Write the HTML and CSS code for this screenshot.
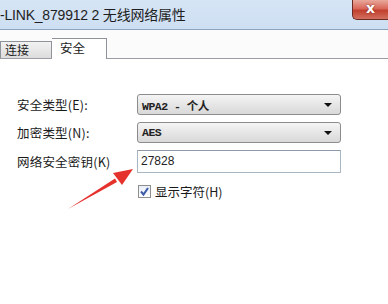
FILE: index.html
```html
<!DOCTYPE html>
<html lang="zh">
<head>
<meta charset="utf-8">
<link rel="stylesheet" href="styles.css">
</head>
<body>
<div class="window">
  <div class="titlebar">
    <span class="title">-LINK_879912 2 无线网络属性</span>
    <div class="close"><span>x</span></div>
  </div>
  <div class="tabstrip">
    <div class="tab">连接</div>
    <div class="tab active">安全</div>
  </div>
  <div class="content">
    <div class="form">
      <label class="lbl">安全类型(E):</label>
      <div class="select"><span>WPA2 - 个人</span><i class="caret"></i></div>
      <label class="lbl">加密类型(N):</label>
      <div class="select"><span>AES</span><i class="caret"></i></div>
      <label class="lbl">网络安全密钥(K)</label>
      <div class="input">27828</div>
      <span></span>
      <div class="check"><span class="box"><svg width="11" height="11" viewBox="0 0 11 11"><path d="M2 5.5 L4.5 8.5 L9 2" fill="none" stroke="#3b5aa8" stroke-width="2"/></svg></span><span>显示字符(H)</span></div>
    </div>
    <svg class="arrow" width="100" height="60" viewBox="0 0 100 60">
      <path d="M5 50 L52 19.5 L54 23 Z" fill="#e5322d"/>
      <path d="M70 10 L50 14 L59 26 Z" fill="#e5322d"/>
    </svg>
  </div>
</div>
</body>
</html>
```
FILE: styles.css
```css
html, body {
  margin: 0;
  padding: 0;
  background: #fff;
}
.window {
  width: 388px;
  height: 304px;
  overflow: hidden;
  font-family: "Noto Sans CJK SC", "Liberation Sans", sans-serif;
  color: #1a1a1a;
}
.titlebar {
  height: 30px;
  display: flex;
  align-items: flex-start;
  background: linear-gradient(#d6e5f5, #cddff2);
  border-bottom: 1px solid #8da2bb;
  box-sizing: border-box;
}
.title {
  font-family: "Liberation Sans", "Noto Sans CJK SC", sans-serif;
  font-size: 14px;
  line-height: 30px;
  color: #1e1e1e;
  letter-spacing: -0.2px;
}
.close {
  margin-left: auto;
  width: 36px;
  height: 20px;
  box-sizing: border-box;
  border: 1px solid #6b2a22;
  border-top: none;
  border-right: none;
  border-bottom-left-radius: 5px;
  background: linear-gradient(#e8a89b 0%, #d9685a 45%, #c2402e 55%, #d2705f 100%);
  display: flex;
  justify-content: center;
  align-items: center;
}
.close span {
  font-family: "DejaVu Sans", sans-serif;
  font-weight: bold;
  color: #fff;
  font-size: 14px;
  line-height: 1;
  margin-top: -3px;
  text-shadow: 0 0 2px #7a2418;
}
.tabstrip {
  height: 29px;
  display: flex;
  align-items: flex-end;
  background: #fbfbfb;
  border-bottom: 1px solid #9a9da3;
  box-sizing: border-box;
}
.tab {
  height: 17px;
  width: 52px;
  box-sizing: border-box;
  border: 1px solid #8e929a;
  border-bottom: none;
  background: linear-gradient(#f2f2f2, #dcdcdc);
  font-size: 12px;
  line-height: 15px;
  padding-left: 4px;
}
.tab.active {
  height: 21px;
  width: 55px;
  background: #fff;
  border-left: none;
  margin-bottom: -1px;
  padding-left: 8px;
  line-height: 18px;
  font-size: 12.5px;
}
.content {
  position: relative;
  padding: 35px 0 0 17px;
}
.form {
  display: grid;
  grid-template-columns: 120px 204px;
  grid-template-rows: 21px 21px 23px 17px;
  row-gap: 7px;
  align-items: center;
}
.form .input { margin-top: -1px; }
.form .check { margin-top: 6px; }
.lbl {
  font-size: 12.5px;
  color: #1a1a1a;
  letter-spacing: 0.2px;
}
.select {
  height: 21px;
  box-sizing: border-box;
  border: 1px solid #8c8c8c;
  border-radius: 3px;
  background: linear-gradient(#f5f5f5, #e6e6e6 50%, #d9d9d9);
  display: flex;
  align-items: center;
  padding: 0 8px 0 4px;
  font-family: "Liberation Mono", "Noto Sans CJK SC", monospace;
  font-size: 11.5px;
  font-weight: bold;
  color: #222;
}
.select span { flex: 1; letter-spacing: -0.5px; }
.caret {
  width: 0;
  height: 0;
  border-left: 4px solid transparent;
  border-right: 4px solid transparent;
  border-top: 4px solid #111;
}
.input {
  height: 23px;
  box-sizing: border-box;
  border: 1px solid #a9b6c4;
  border-top-color: #8d9aa8;
  background: #fff;
  font-family: "Liberation Sans", sans-serif;
  font-size: 12px;
  line-height: 21px;
  padding-left: 3px;
  color: #222;
}
.check {
  display: flex;
  align-items: center;
  gap: 4px;
  font-size: 12.5px;
  padding-left: 1px;
}
.box {
  width: 13px;
  height: 13px;
  box-sizing: border-box;
  border: 1px solid #8f8f8f;
  background: linear-gradient(#e8eef7, #ffffff);
  display: flex;
  align-items: center;
  justify-content: center;
}
.arrow {
  position: absolute;
  left: 63px;
  top: 100px;
}
```
